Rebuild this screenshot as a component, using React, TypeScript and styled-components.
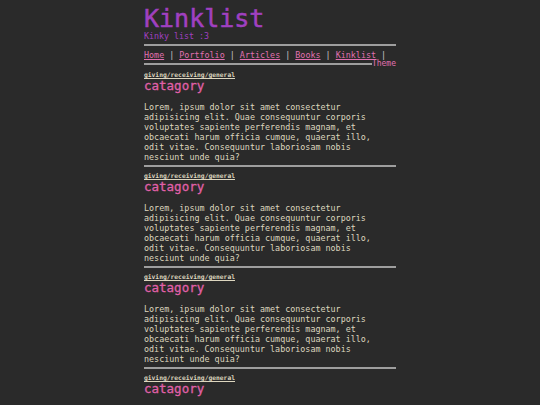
import React from "react";
import styled, { createGlobalStyle } from "styled-components";

const GlobalStyle = createGlobalStyle`
  html, body {
    margin: 0;
    padding: 0;
    background: #2a2a2a;
  }
  body {
    font-family: "DejaVu Sans Mono", "Liberation Mono", monospace;
    color: #ddd6bf;
  }
`;

const Page = styled.main`
  width: 252px;
  margin: 0 auto;
  padding-top: 6px;
`;

const Title = styled.h1`
  margin: 0;
  font-size: 25px;
  line-height: 25px;
  font-weight: normal;
  color: #a040c0;
  -webkit-text-stroke: 0.5px #a040c0;
`;

const Tagline = styled.div`
  font-size: 8.3px;
  line-height: 10px;
  color: #a040c0;
`;

const Rule = styled.hr<{ $top?: number }>`
  margin: ${(p) => p.$top ?? 0}px 0 0;
  border: 0;
  height: 2px;
  background: #9e9e9e;
`;

const Nav = styled.nav`
  margin-top: 4px;
  font-size: 8.4px;
  line-height: 10px;
  color: #c8c8c8;
  white-space: nowrap;
`;

const NavLink = styled.a`
  color: #e070b0;
  text-decoration: underline;
`;

const ThemeRow = styled.div`
  display: flex;
  align-items: center;
  height: 8px;
`;

const ThemeLine = styled.div`
  flex: 1;
  height: 2px;
  background: #9e9e9e;
`;

const ThemeButton = styled.span`
  font-size: 8px;
  line-height: 8px;
  color: #e070b0;
`;

const Entry = styled.section`
  display: flex;
  flex-direction: column;
`;

const Tag = styled.a<{ $top: number }>`
  margin-top: ${(p) => p.$top}px;
  font-size: 6.3px;
  line-height: 8px;
  font-weight: bold;
  color: #ddd6bf;
  text-decoration: underline;
`;

const Category = styled.h2`
  margin: 0;
  font-size: 12.5px;
  line-height: 13px;
  font-weight: normal;
  color: #e060a8;
  -webkit-text-stroke: 0.3px #e060a8;
`;

const Body = styled.p`
  margin: 10px 2px 0 0;
  font-size: 8.4px;
  line-height: 10px;
`;

const lorem =
  "Lorem, ipsum dolor sit amet consectetur adipisicing elit. Quae consequuntur corporis voluptates sapiente perferendis magnam, et obcaecati harum officia cumque, quaerat illo, odit vitae. Consequuntur laboriosam nobis nesciunt unde quia?";

const links = ["Home", "Portfolio", "Articles", "Books", "Kinklist"];

export default function App() {
  return (
    <>
      <GlobalStyle />
      <Page>
        <Title>Kinklist</Title>
        <Tagline>Kinky list :3</Tagline>
        <Rule $top={3} />
        <Nav>
          {links.map((l) => (
            <React.Fragment key={l}>
              <NavLink href="#">{l}</NavLink> |{" "}
            </React.Fragment>
          ))}
        </Nav>
        <ThemeRow>
          <ThemeLine />
          <ThemeButton>Theme</ThemeButton>
        </ThemeRow>
        {[0, 1, 2, 3].map((i) => (
          <Entry key={i}>
            {i > 0 && <Rule $top={3} />}
            <Tag href="#" $top={i === 0 ? 3 : 5}>
              giving/receiving/general
            </Tag>
            <Category>catagory</Category>
            <Body>{lorem}</Body>
          </Entry>
        ))}
      </Page>
    </>
  );
}
